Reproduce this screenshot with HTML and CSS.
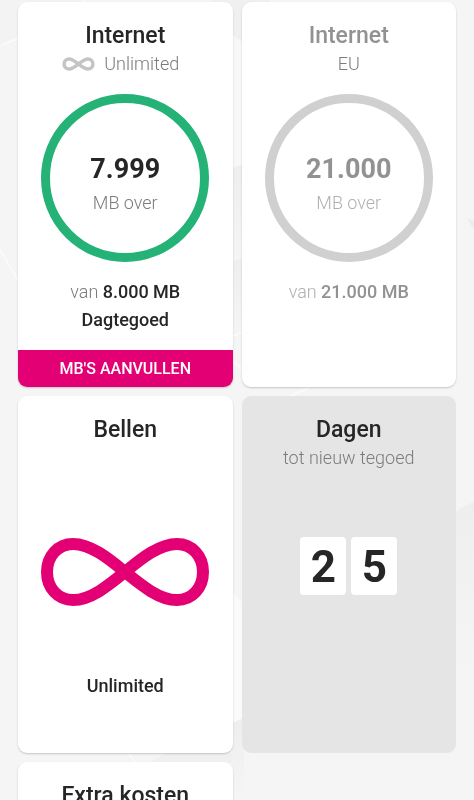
FILE: index.html
```html
<!DOCTYPE html>
<html lang="nl">
<head>
<meta charset="utf-8">
<meta name="viewport" content="width=device-width, initial-scale=1">
<title>Mijn tegoed</title>
<link rel="stylesheet" href="styles.css">
</head>
<body>
<svg class="backdrop" viewBox="0 0 474 800" preserveAspectRatio="xMidYMid slice" aria-hidden="true">
  <defs>
    <linearGradient id="shade" x1="0" y1="0" x2="0" y2="1">
      <stop offset="0" stop-color="#eeeeee"/>
      <stop offset="1" stop-color="#f5f5f5"/>
    </linearGradient>
  </defs>
  <path d="M0 0H85L0 46Z" fill="#f3f3f3"/>
  <path d="M0 46 18 38M75 6 85 0M0 250 18 280" fill="none" stroke="#fafafa" stroke-width="2"/>
  <path d="M210 0H270V60L232 34Z" fill="#f0f0f0"/>
  <path d="M232 34 244 46V164L232 168Z" fill="#f8f8f8"/>
  <path d="M232 168 244 164V258L232 261Z" fill="url(#shade)"/>
  <path d="M232 261 244 258V332L232 336Z" fill="url(#shade)"/>
  <path d="M232 592 244 604V718L232 723Z" fill="#fafafa"/>
  <path d="M232 723 244 718V800H232Z" fill="url(#shade)"/>
  <path d="M455 512Q464 505 474 502V660L455 668Z" fill="url(#shade)"/>
  <path d="M467 218 474 230V221Z" fill="#ececec"/>
  <path d="M232 336 244 332M232 360 242 369M290 396 310 387" fill="none" stroke="#fafafa" stroke-width="2"/>
  <path d="M150 763 165 753H232V763Z" fill="#f0f0f0"/>
  <path d="M129 753 135 763" stroke="#fafafa" stroke-width="2"/>
</svg>
<main class="cards">
  <section class="card">
    <h2 class="title">Internet</h2>
    <p class="subtitle with-icon">
      <svg class="mini-infinity" viewBox="0 0 168 72" aria-hidden="true">
        <path d="M84 36C66 22 52 10 36 10C20 10 10 21 10 36S20 62 36 62C52 62 66 50 84 36S116 10 132 10C148 10 158 21 158 36S148 62 132 62C116 62 102 50 84 36Z"/>
      </svg>
      Unlimited
    </p>
    <div class="figure ring">
      <strong class="amount">7.999</strong>
      <span class="unit">MB over</span>
    </div>
    <p class="total">van <strong>8.000 MB</strong></p>
    <p class="total"><strong>Dagtegoed</strong></p>
    <button class="refill" type="button">MB'S AANVULLEN</button>
  </section>

  <section class="card inactive">
    <h2 class="title">Internet</h2>
    <p class="subtitle">EU</p>
    <div class="figure ring">
      <strong class="amount">21.000</strong>
      <span class="unit">MB over</span>
    </div>
    <p class="total">van <strong>21.000 MB</strong></p>
  </section>

  <section class="card plain">
    <h2 class="title">Bellen</h2>
    <p class="subtitle"></p>
    <div class="figure">
      <svg class="infinity" viewBox="0 0 168 68" aria-hidden="true">
        <path d="M84 34C68 21 50 6 32 6C17 6 6 18 6 34S17 62 32 62C50 62 68 47 84 34S118 6 136 6C151 6 162 18 162 34S151 62 136 62C118 62 100 47 84 34Z"/>
      </svg>
    </div>
    <p class="total"><strong>Unlimited</strong></p>
  </section>

  <section class="card days">
    <h2 class="title">Dagen</h2>
    <p class="subtitle">tot nieuw tegoed</p>
    <div class="figure counter">
      <span class="digit">2</span>
      <span class="digit">5</span>
    </div>
  </section>

  <section class="card plain">
    <h2 class="title">Extra kosten</h2>
    <p class="subtitle"></p>
  </section>
</main>
</body>
</html>
```
FILE: styles.css
```css
* {
  box-sizing: border-box;
}

html {
  min-height: 100%;
  scrollbar-width: none;
}

body {
  margin: 0;
  background: #f5f5f5;
  color: #262626;
  font-family: Roboto, "Liberation Sans", sans-serif;
  font-size: 18px;
  line-height: 28px;
}

.backdrop {
  position: fixed;
  inset: 0;
  width: 100%;
  height: 100%;
  z-index: -1;
}

.cards {
  display: grid;
  grid-template-columns: 1fr 1fr;
  gap: 9px;
  padding: 2px 18px 18px;
}

.card {
  display: flex;
  flex-direction: column;
  align-items: center;
  padding-top: 20px;
  border-radius: 9px;
  background: #fff;
  box-shadow: 0 1px 2px rgba(0, 0, 0, 0.2);
  overflow: hidden;
  text-align: center;
}

.plain {
  padding-bottom: 53px;
}

.title {
  margin: 0;
  font-size: 23px;
  font-weight: 500;
}

.subtitle {
  display: flex;
  align-items: center;
  gap: 9px;
  min-height: 28px;
  margin: 0;
  color: #7c7c7c;
  font-weight: 300;
}

.with-icon {
  padding-right: 9px;
}

.mini-infinity {
  width: 33px;
  height: 14px;
  fill: none;
  stroke: #c4c4c4;
  stroke-width: 18px;
}

.figure {
  display: flex;
  align-items: center;
  justify-content: center;
  width: 168px;
  height: 168px;
  margin: 16px 0;
}

.ring {
  flex-direction: column;
  gap: 6px;
  padding-top: 16px;
  border: 9px solid #24b277;
  border-radius: 50%;
}

.amount {
  font-size: 27px;
  font-weight: 700;
}

.unit,
.total {
  color: #7c7c7c;
  font-weight: 300;
}

.total {
  margin: 0;
}

.total strong {
  color: #262626;
  font-weight: 500;
}

.refill {
  align-self: stretch;
  height: 37px;
  margin-top: 16px;
  padding: 0;
  border: 0;
  background: #e20074;
  color: #fff;
  font-family: inherit;
  font-size: 16px;
  font-weight: 500;
}

.inactive .title,
.inactive .amount,
.inactive .total strong {
  color: #929292;
}

.inactive .unit,
.inactive .total {
  color: #b0b0b0;
}

.inactive .ring {
  border-color: #d0d0d0;
}

.infinity {
  width: 168px;
  height: 68px;
  fill: none;
  stroke: #e20074;
  stroke-width: 12px;
}

.days {
  background: #e5e5e5;
  box-shadow: none;
}

.counter {
  gap: 5px;
  padding-bottom: 12px;
}

.digit {
  width: 46px;
  height: 58px;
  border-radius: 4px;
  background: #fff;
  font-size: 44px;
  font-weight: 700;
  line-height: 60px;
}
```
